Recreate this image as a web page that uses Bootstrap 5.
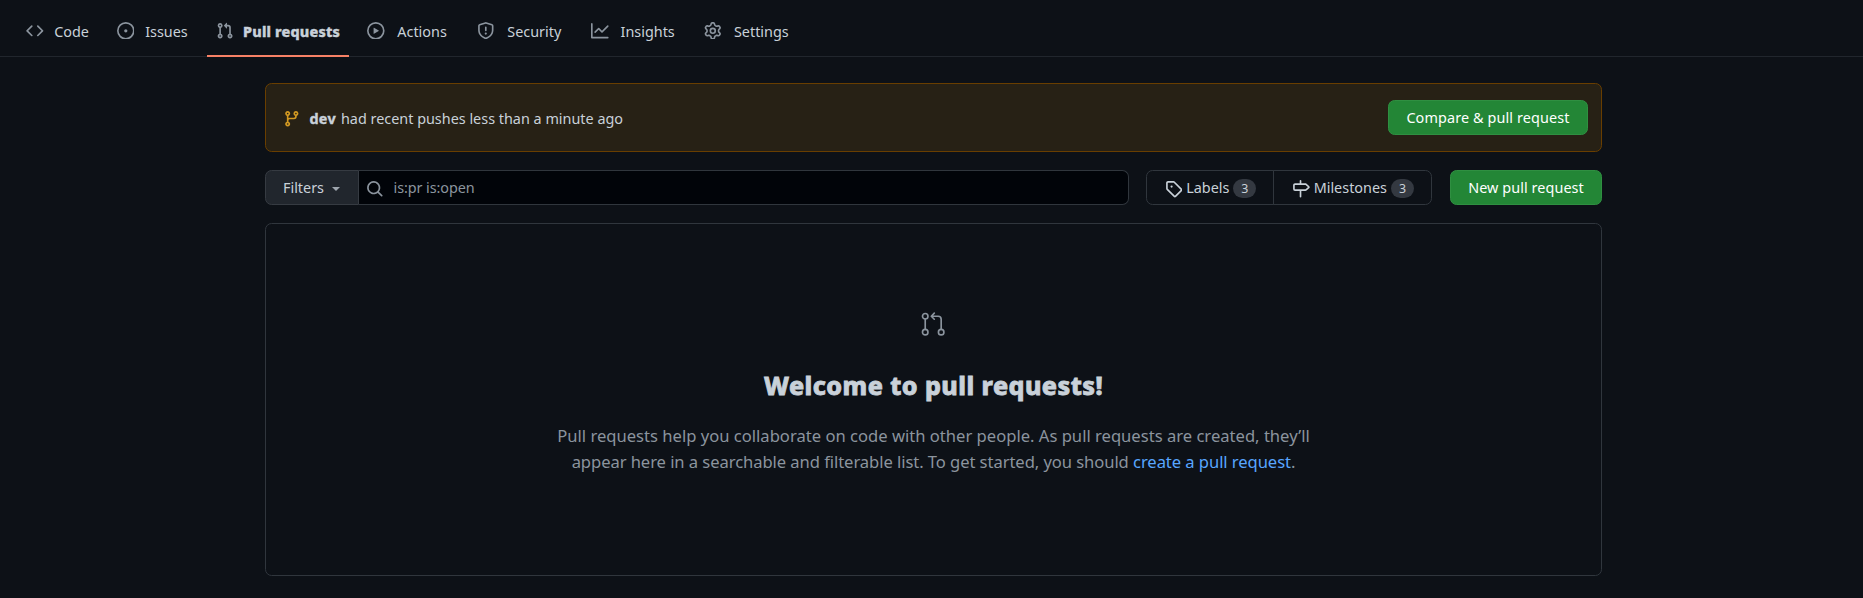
<!DOCTYPE html>
<html lang="en" data-bs-theme="dark">
<head>
<meta charset="utf-8">
<meta name="viewport" content="width=device-width, initial-scale=1">
<title>Pull requests</title>
<link href="https://cdn.jsdelivr.net/npm/bootstrap@5.3.0/dist/css/bootstrap.min.css" rel="stylesheet">
<style>
body{background:#0d1117;color:#c9d1d9;font-family:"Noto Sans",sans-serif;font-size:14.4px;line-height:23px;overflow:hidden}
svg{display:block;flex:none;width:17.6px;height:17.6px;fill:currentColor}
.repo-nav{height:57px;padding:7px 17.6px 0;gap:8.8px;border-bottom:1px solid #21262d;flex-wrap:nowrap}
.repo-nav .nav-link{display:flex;align-items:center;padding:0 8.8px;gap:8.8px;height:50px;color:#c9d1d9;border-bottom:2px solid transparent}
.repo-nav .nav-link svg{color:#8b949e;margin-bottom:1px}
.repo-nav .nav-link.active{font-weight:800;border-color:#f78166}
.repo-nav .nav-link.active span{-webkit-text-stroke:.4px currentColor;letter-spacing:.18px}
.repo-nav span{display:flex;justify-content:center;white-space:nowrap}
.w-code{width:37.6px}.w-issues{width:46.6px}.w-pulls{width:98px}.w-actions{width:57.5px}.w-security{width:61.4px}.w-insights{width:59.8px}.w-settings{width:62px}
.page{width:1337px;margin:26px auto 0 265px}
.push-note{height:69px;padding:0 13px 0 16.6px;border:1px solid #693e00;border-radius:6.6px;background:#272115}
.push-note svg{color:#d29922;margin-right:9.2px;margin-top:2px}
.push-note strong{-webkit-text-stroke:.4px currentColor;letter-spacing:.4px;margin-right:1px}
.note-text{padding-top:1px}
.btn{--bs-btn-font-size:14.4px;--bs-btn-line-height:23px;--bs-btn-padding-y:0;--bs-btn-padding-x:0;--bs-btn-border-radius:6.6px;height:35px;display:flex;align-items:center;justify-content:center;white-space:nowrap}
.btn-success{--bs-btn-bg:#238636;--bs-btn-border-color:#2f8f41}
.btn-compare{width:200px;letter-spacing:.12px}.btn-new{width:152px;letter-spacing:.08px}
.tools{margin-top:18px}
.search-group{width:864px;height:35px;margin-right:17px}
.btn-filter{width:94px;background:#21262d;border-color:#363b42;color:#c9d1d9;gap:8px;padding-right:1px}
.btn-filter::after{margin:3px 0 0;border-top-width:4.4px;border-left-width:4.4px;border-right-width:4.4px;opacity:.75}
.search-box{background:#010409;border:1px solid #30363d;border-left:0;border-radius:0 6.6px 6.6px 0;color:#8b949e;padding-left:7px;gap:10px;letter-spacing:-.08px}
.search-box svg{margin-top:2px}
.meta-group{margin-right:18px}
.meta-group .btn{color:#c9d1d9;border-color:#30363d;gap:4px;padding-left:1px}
.meta-group .btn svg{margin-top:3px}
.btn-labels{width:128px}.btn-miles{width:159px}
.meta-group .counter{min-width:23px;height:19px;margin-top:1px;border-radius:22px;background:#343941;font-size:12.4px;line-height:19px;text-align:center}
.blank{margin-top:18px;height:353px;border:1px solid #30363d;border-radius:6.6px;padding-top:87px}
.blank svg{width:26.4px;height:26.4px;color:#8b949e}
.blank h3{font-size:25px;font-weight:800;line-height:40px;margin:28px 0 0;color:#c9d1d9;letter-spacing:.45px;-webkit-text-stroke:.8px currentColor}
.blank p{font-size:16.6px;line-height:26px;color:#8b949e;margin:18px 0 0;white-space:nowrap}
.blank p .second{letter-spacing:-.07px}
.blank a{color:#58a6ff;text-decoration:none}
</style>
</head>
<body>
<nav class="nav repo-nav">
  <a class="nav-link" href="#"><svg viewBox="0 0 16 16"><path d="M4.72 3.22a.75.75 0 011.06 1.06L2.06 8l3.72 3.72a.75.75 0 11-1.06 1.06L.47 8.53a.75.75 0 010-1.06l4.25-4.25zm6.56 0a.75.75 0 10-1.06 1.06L13.94 8l-3.72 3.72a.75.75 0 101.06 1.06l4.25-4.25a.75.75 0 000-1.06l-4.25-4.25z"/></svg><span class="w-code">Code</span></a>
  <a class="nav-link" href="#"><svg viewBox="0 0 16 16"><path fill-rule="evenodd" d="M8 9.5a1.5 1.5 0 100-3 1.5 1.5 0 000 3zM8 0a8 8 0 100 16A8 8 0 008 0zM1.5 8a6.5 6.5 0 1113 0 6.5 6.5 0 01-13 0z"/></svg><span class="w-issues">Issues</span></a>
  <a class="nav-link active" href="#"><svg viewBox="0 0 16 16"><path fill-rule="evenodd" d="M7.177 3.073L9.573.677A.25.25 0 0110 .854v4.792a.25.25 0 01-.427.177L7.177 3.427a.25.25 0 010-.354zM3.75 2.5a.75.75 0 100 1.5.75.75 0 000-1.5zm-2.25.75a2.25 2.25 0 113 2.122v5.256a2.251 2.251 0 11-1.5 0V5.372A2.25 2.25 0 011.5 3.25zM11 2.5h-1V4h1a1 1 0 011 1v5.628a2.251 2.251 0 101.5 0V5A2.5 2.5 0 0011 2.5zm1 10.25a.75.75 0 111.5 0 .75.75 0 01-1.5 0zM3.75 12a.75.75 0 100 1.5.75.75 0 000-1.5z"/></svg><span class="w-pulls">Pull requests</span></a>
  <a class="nav-link" href="#"><svg viewBox="0 0 16 16"><path fill-rule="evenodd" d="M1.5 8a6.5 6.5 0 1113 0 6.5 6.5 0 01-13 0zM8 0a8 8 0 100 16A8 8 0 008 0zM6.379 5.227A.25.25 0 006 5.442v5.117a.25.25 0 00.379.214l4.264-2.559a.25.25 0 000-.428L6.379 5.227z"/></svg><span class="w-actions">Actions</span></a>
  <a class="nav-link" href="#"><svg viewBox="0 0 16 16"><path fill-rule="evenodd" d="M7.467.133a1.75 1.75 0 011.066 0l5.25 1.68A1.75 1.75 0 0115 3.48V7c0 1.566-.32 3.182-1.303 4.682-.983 1.498-2.585 2.813-5.032 3.855a1.7 1.7 0 01-1.33 0c-2.447-1.042-4.049-2.357-5.032-3.855C1.32 10.182 1 8.566 1 7V3.48a1.75 1.75 0 011.217-1.667l5.25-1.68zm.61 1.429a.25.25 0 00-.153 0l-5.25 1.68a.25.25 0 00-.174.238V7c0 1.358.275 2.666 1.057 3.86.784 1.194 2.121 2.34 4.366 3.297a.2.2 0 00.154 0c2.245-.956 3.582-2.104 4.366-3.298C13.225 9.666 13.5 8.36 13.5 7V3.48a.25.25 0 00-.174-.237l-5.25-1.68zM9 10.5a1 1 0 11-2 0 1 1 0 012 0zm-.25-5.75a.75.75 0 10-1.5 0v3a.75.75 0 001.5 0v-3z"/></svg><span class="w-security">Security</span></a>
  <a class="nav-link" href="#"><svg viewBox="0 0 16 16"><path fill-rule="evenodd" d="M1.5 1.75a.75.75 0 00-1.5 0v12.5c0 .414.336.75.75.75h14.5a.75.75 0 000-1.5H1.5V1.75zm14.28 2.53a.75.75 0 00-1.06-1.06L10 7.94 7.53 5.47a.75.75 0 00-1.06 0L3.22 8.72a.75.75 0 001.06 1.06L7 7.06l2.47 2.47a.75.75 0 001.06 0l5.25-5.25z"/></svg><span class="w-insights">Insights</span></a>
  <a class="nav-link" href="#"><svg viewBox="0 0 16 16"><path fill-rule="evenodd" d="M7.429 1.525a6.593 6.593 0 011.142 0c.036.003.108.036.137.146l.289 1.105c.147.56.55.967.997 1.189.174.086.341.183.501.29.417.278.97.423 1.53.27l1.102-.303c.11-.03.175.016.195.046.219.31.41.641.573.989.014.031.022.11-.059.19l-.815.806c-.411.406-.562.957-.53 1.456a4.588 4.588 0 010 .582c-.032.499.119 1.05.53 1.456l.815.806c.08.08.073.159.059.19a6.494 6.494 0 01-.573.99c-.02.029-.086.074-.195.045l-1.103-.303c-.559-.153-1.112-.008-1.529.27-.16.107-.327.204-.5.29-.449.222-.851.628-.998 1.189l-.289 1.105c-.029.11-.101.143-.137.146a6.613 6.613 0 01-1.142 0c-.036-.003-.108-.037-.137-.146l-.289-1.105c-.147-.56-.55-.967-.997-1.189a4.502 4.502 0 01-.501-.29c-.417-.278-.97-.423-1.53-.27l-1.102.303c-.11.03-.175-.016-.195-.046a6.492 6.492 0 01-.573-.989c-.014-.031-.022-.11.059-.19l.815-.806c.411-.406.562-.957.53-1.456a4.587 4.587 0 010-.582c.032-.499-.119-1.05-.53-1.456l-.815-.806c-.08-.08-.073-.159-.059-.19a6.44 6.44 0 01.573-.99c.02-.029.086-.075.195-.045l1.103.303c.559.153 1.112.008 1.529-.27.16-.107.327-.204.5-.29.449-.222.851-.628.998-1.189l.289-1.105c.029-.11.101-.143.137-.146zM8 0c-.236 0-.47.01-.701.03-.743.065-1.29.615-1.458 1.261l-.29 1.106c-.017.066-.078.158-.211.224a5.994 5.994 0 00-.668.386c-.123.082-.233.09-.3.071L3.27 2.776c-.644-.177-1.392.02-1.82.63a7.977 7.977 0 00-.704 1.217c-.315.675-.111 1.422.363 1.891l.815.806c.05.048.098.147.088.294a6.084 6.084 0 000 .772c.01.147-.038.246-.088.294l-.815.806c-.474.469-.678 1.216-.363 1.891.2.428.436.835.704 1.218.428.609 1.176.806 1.82.63l1.103-.303c.066-.019.176-.011.299.071.213.143.436.272.668.386.133.066.194.158.212.224l.289 1.106c.169.646.715 1.196 1.458 1.26a8.094 8.094 0 001.402 0c.743-.064 1.29-.614 1.458-1.26l.29-1.106c.017-.066.078-.158.211-.224a5.98 5.98 0 00.668-.386c.123-.082.233-.09.3-.071l1.102.302c.644.177 1.392-.02 1.82-.63.268-.382.505-.789.704-1.217.315-.675.111-1.422-.364-1.891l-.814-.806c-.05-.048-.098-.147-.088-.294a6.1 6.1 0 000-.772c-.01-.147.039-.246.088-.294l.814-.806c.475-.469.679-1.216.364-1.891a7.992 7.992 0 00-.704-1.218c-.428-.609-1.176-.806-1.82-.63l-1.103.303c-.066.019-.176.011-.299-.071a5.991 5.991 0 00-.668-.386c-.133-.066-.194-.158-.212-.224L10.16 1.29C9.99.645 9.444.095 8.701.031A8.094 8.094 0 008 0zm1.5 8a1.5 1.5 0 11-3 0 1.5 1.5 0 013 0zM11 8a3 3 0 11-6 0 3 3 0 016 0z"/></svg><span class="w-settings">Settings</span></a>
</nav>

<main class="page">
  <div class="push-note d-flex align-items-center">
    <svg viewBox="0 0 16 16"><path fill-rule="evenodd" d="M11.75 2.5a.75.75 0 100 1.5.75.75 0 000-1.5zm-2.25.75a2.25 2.25 0 113 2.122V6A2.5 2.5 0 0110 8.5H6a1 1 0 00-1 1v1.128a2.251 2.251 0 11-1.5 0V5.372a2.25 2.25 0 111.5 0v1.836A2.492 2.492 0 016 7h4a1 1 0 001-1v-.628A2.25 2.25 0 019.5 3.25zM4.25 12a.75.75 0 100 1.5.75.75 0 000-1.5zM3.5 3.25a.75.75 0 111.5 0 .75.75 0 01-1.5 0z"/></svg>
    <div class="note-text"><strong>dev</strong> had recent pushes less than a minute ago</div>
    <button class="btn btn-success btn-compare ms-auto">Compare &amp; pull request</button>
  </div>

  <div class="tools d-flex align-items-center">
    <div class="search-group d-flex">
      <button class="btn btn-filter dropdown-toggle rounded-end-0">Filters</button>
      <div class="search-box d-flex align-items-center flex-grow-1">
        <svg viewBox="0 0 16 16"><path fill-rule="evenodd" d="M11.5 7a4.499 4.499 0 11-8.998 0A4.499 4.499 0 0111.5 7zm-.82 4.74a6 6 0 111.06-1.06l3.04 3.04a.75.75 0 11-1.06 1.06l-3.04-3.04z"/></svg>
        <span>is:pr is:open</span>
      </div>
    </div>
    <div class="btn-group meta-group">
      <a class="btn btn-labels" href="#"><svg viewBox="0 0 16 16"><path fill-rule="evenodd" d="M2.5 7.775V2.75a.25.25 0 01.25-.25h5.025a.25.25 0 01.177.073l6.25 6.25a.25.25 0 010 .354l-5.025 5.025a.25.25 0 01-.354 0l-6.25-6.25a.25.25 0 01-.073-.177zm-1.5 0V2.75C1 1.784 1.784 1 2.75 1h5.025c.464 0 .91.184 1.238.513l6.25 6.25a1.75 1.75 0 010 2.474l-5.026 5.026a1.75 1.75 0 01-2.474 0l-6.25-6.25A1.75 1.75 0 011 7.775zM6 5a1 1 0 100 2 1 1 0 000-2z"/></svg><span>Labels</span><span class="counter">3</span></a>
      <a class="btn btn-miles" href="#"><svg viewBox="0 0 16 16"><path fill-rule="evenodd" d="M7.75 0a.75.75 0 01.75.75V3h3.634c.414 0 .814.147 1.13.414l2.07 1.75a1.75 1.75 0 010 2.672l-2.07 1.75a1.75 1.75 0 01-1.13.414H8.5v5.25a.75.75 0 11-1.5 0V10H2.75A1.75 1.75 0 011 8.25v-3.5C1 3.784 1.784 3 2.75 3H7V.75A.75.75 0 017.75 0zm0 8.5h4.384a.25.25 0 00.161-.06l2.07-1.75a.25.25 0 000-.38l-2.07-1.75a.25.25 0 00-.161-.06H2.75a.25.25 0 00-.25.25v3.5c0 .138.112.25.25.25h5z"/></svg><span>Milestones</span><span class="counter">3</span></a>
    </div>
    <button class="btn btn-success btn-new">New pull request</button>
  </div>

  <section class="blank d-flex flex-column align-items-center text-center">
    <svg viewBox="0 0 24 24" style="fill:none" stroke="currentColor" stroke-width="1.5" stroke-linecap="round" stroke-linejoin="round"><circle cx="4.75" cy="4.75" r="2.5"/><circle cx="4.75" cy="19.25" r="2.5"/><circle cx="19.25" cy="19.25" r="2.5"/><path d="M4.75 7.25v9.5M19.25 16.75V7.5a2.75 2.75 0 00-2.75-2.75H10.5M13 2L10.25 4.75 13 7.5"/></svg>
    <h3>Welcome to pull requests!</h3>
    <p>Pull requests help you collaborate on code with other people. As pull requests are created, they’ll<br><span class="second">appear here in a searchable and filterable list. To get started, you should <a href="#">create a pull request</a>.</span></p>
  </section>
</main>
<script src="https://cdn.jsdelivr.net/npm/bootstrap@5.3.0/dist/js/bootstrap.bundle.min.js"></script>
</body>
</html>
